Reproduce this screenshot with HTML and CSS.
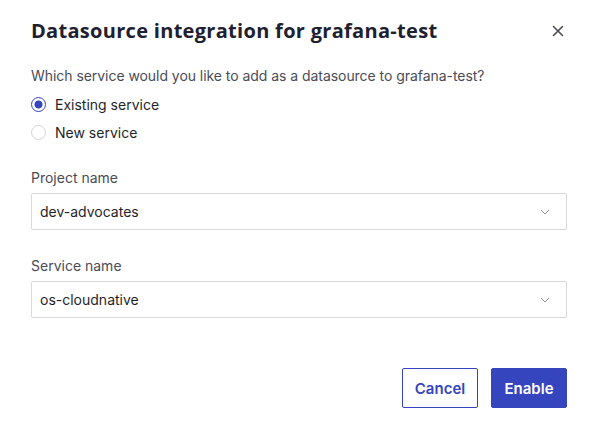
FILE: index.html
```html
<!DOCTYPE html>
<html lang="en">
<head>
<meta charset="utf-8">
<title>Datasource integration</title>
<link rel="stylesheet" href="styles.css">
</head>
<body>
<div class="dialog">
  <div class="header">
    <h1 class="title">Datasource integration for grafana-test</h1>
    <button class="close" aria-label="Close">
      <svg width="12" height="12" viewBox="0 0 12 12"><path d="M1.5 1.5 L10.5 10.5 M10.5 1.5 L1.5 10.5" stroke="#4a4b57" stroke-width="1.6" stroke-linecap="round"/></svg>
    </button>
  </div>
  <p class="question">Which service would you like to add as a datasource to grafana-test?</p>
  <div class="radios">
    <label class="radio"><span class="dot checked"></span>Existing service</label>
    <label class="radio"><span class="dot"></span>New service</label>
  </div>
  <div class="field first">
    <div class="label">Project name</div>
    <div class="select"><span>dev-advocates</span>
      <svg class="chev" width="10" height="6" viewBox="0 0 10 6"><path d="M1 1 L5 5 L9 1" fill="none" stroke="#9a9aa3" stroke-width="1"/></svg>
    </div>
  </div>
  <div class="field">
    <div class="label">Service name</div>
    <div class="select"><span>os-cloudnative</span>
      <svg class="chev" width="10" height="6" viewBox="0 0 10 6"><path d="M1 1 L5 5 L9 1" fill="none" stroke="#9a9aa3" stroke-width="1"/></svg>
    </div>
  </div>
  <div class="actions">
    <button class="btn secondary">Cancel</button>
    <button class="btn primary">Enable</button>
  </div>
</div>
</body>
</html>
```
FILE: styles.css
```css
html, body {
  margin: 0;
  padding: 0;
  background: #ffffff;
}
body {
  font-family: Inter, "Liberation Sans", sans-serif;
  color: #1f1f2a;
}
.dialog {
  padding: 17px 29px 0 31px;
}
.header {
  display: flex;
  align-items: center;
  justify-content: space-between;
  height: 28px;
}
.title {
  margin: 0;
  font-family: "Open Sans", "Liberation Sans", sans-serif;
  font-size: 20px;
  font-weight: 700;
  line-height: 28px;
  color: #202030;
  letter-spacing: 0.3px;
}
.close {
  border: 0;
  background: none;
  padding: 0;
  width: 12px;
  height: 12px;
  margin-right: 3px;
  display: flex;
}
.question {
  margin: 21px 0 0;
  font-size: 14px;
  line-height: 20px;
  color: #4a4b57;
  letter-spacing: -0.05px;
}
.radios {
  margin-top: 4px;
  display: flex;
  flex-direction: column;
}
.radio {
  display: flex;
  align-items: center;
  height: 28px;
  font-size: 14px;
  color: #1f1f2a;
}
.dot {
  box-sizing: border-box;
  width: 15px;
  height: 15px;
  border-radius: 50%;
  border: 1px solid #d4d4da;
  margin-right: 9px;
  background: #fff;
}
.dot.checked {
  border: 1.5px solid #3545be;
  background: radial-gradient(circle, #3545be 0 3.6px, #fff 4.4px);
}
.field {
  margin-top: 26px;
}
.field.first {
  margin-top: 22px;
}
.label {
  font-size: 14px;
  line-height: 20px;
  color: #4a4b57;
}
.select {
  margin-top: 5px;
  box-sizing: border-box;
  height: 37px;
  border: 1px solid #d8d8de;
  border-radius: 2px;
  display: flex;
  align-items: center;
  justify-content: space-between;
  padding: 0 16px 0 8px;
  font-size: 14px;
  color: #1f1f2a;
}
.actions {
  margin-top: 50px;
  display: flex;
  justify-content: flex-end;
  gap: 13px;
}
.btn {
  box-sizing: border-box;
  height: 40px;
  width: 76px;
  border-radius: 2px;
  font-family: Inter, "Liberation Sans", sans-serif;
  font-size: 15px;
  font-weight: 600;
  padding: 0;
}
.secondary {
  background: #fff;
  border: 1px solid #3545be;
  color: #3545be;
}
.primary {
  background: #3545be;
  border: 1px solid #3545be;
  color: #fff;
}
```
